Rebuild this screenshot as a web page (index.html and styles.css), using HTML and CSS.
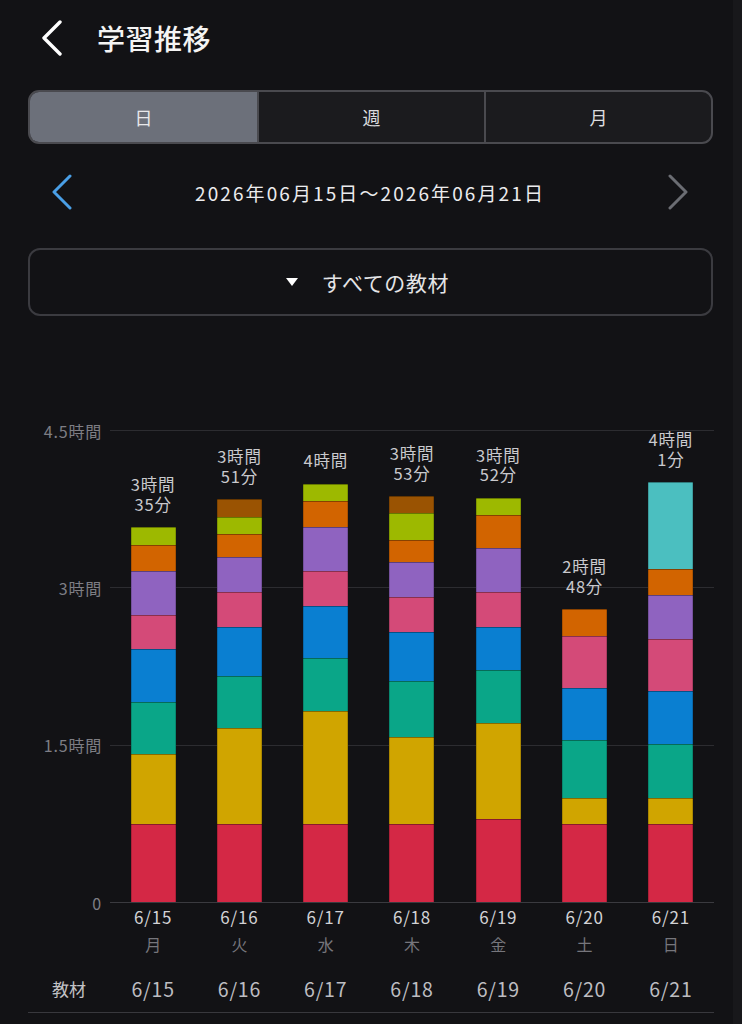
FILE: index.html
```html
<!DOCTYPE html>
<html lang="ja">
<head>
<meta charset="utf-8">
<title>学習推移</title>
<link rel="stylesheet" href="styles.css">
</head>
<body>
<div class="app">
  <header class="header">
    <svg class="back" width="24" height="36" viewBox="0 0 24 36"><path d="M20 2 L4 18 L20 34" fill="none" stroke="#ffffff" stroke-width="3.4" stroke-linecap="round" stroke-linejoin="round"/></svg>
    <h1 class="title">学習推移</h1>
  </header>

  <div class="tabs">
    <div class="tab active">日</div>
    <div class="tab">週</div>
    <div class="tab">月</div>
  </div>

  <div class="datenav">
    <svg class="chev" width="22" height="36" viewBox="0 0 22 36"><path d="M19 2 L3 18 L19 34" fill="none" stroke="#4a9fe6" stroke-width="3" stroke-linecap="round" stroke-linejoin="round"/></svg>
    <div class="range">2026年06月15日～2026年06月21日</div>
    <svg class="chev" width="22" height="36" viewBox="0 0 22 36"><path d="M3 2 L19 18 L3 34" fill="none" stroke="#6b6d73" stroke-width="3" stroke-linecap="round" stroke-linejoin="round"/></svg>
  </div>

  <div class="select">
    <span class="tri"></span>
    <span class="select-text">すべての教材</span>
  </div>

  <div class="chart">
    <div class="grid-layer">
      <div class="gl"><span class="yl">4.5時間</span><span class="line"></span></div>
      <div class="gl"><span class="yl">3時間</span><span class="line"></span></div>
      <div class="gl"><span class="yl">1.5時間</span><span class="line"></span></div>
      <div class="gl"><span class="yl">0</span><span class="line base"></span></div>
    </div>
    <div class="bars-layer">
      <div class="col">
        <div class="val"><span class="vl">3時間</span><span class="vl">35分</span></div>
        <div class="bar">
          <div class="seg lime" style="height:17.44px"></div>
          <div class="seg orange" style="height:26.17px"></div>
          <div class="seg purple" style="height:43.61px"></div>
          <div class="seg pink" style="height:34.89px"></div>
          <div class="seg blue" style="height:52.33px"></div>
          <div class="seg teal" style="height:52.33px"></div>
          <div class="seg yellow" style="height:69.78px"></div>
          <div class="seg red" style="height:78.5px"></div>
        </div>
      </div>
      <div class="col">
        <div class="val"><span class="vl">3時間</span><span class="vl">51分</span></div>
        <div class="bar">
          <div class="seg brown" style="height:17.44px"></div>
          <div class="seg lime" style="height:17.44px"></div>
          <div class="seg orange" style="height:22.68px"></div>
          <div class="seg purple" style="height:34.89px"></div>
          <div class="seg pink" style="height:34.89px"></div>
          <div class="seg blue" style="height:48.84px"></div>
          <div class="seg teal" style="height:52.33px"></div>
          <div class="seg yellow" style="height:95.94px"></div>
          <div class="seg red" style="height:78.5px"></div>
        </div>
      </div>
      <div class="col">
        <div class="val"><span class="vl">4時間</span></div>
        <div class="bar">
          <div class="seg lime" style="height:17.44px"></div>
          <div class="seg orange" style="height:26.17px"></div>
          <div class="seg purple" style="height:43.61px"></div>
          <div class="seg pink" style="height:34.89px"></div>
          <div class="seg blue" style="height:52.33px"></div>
          <div class="seg teal" style="height:52.33px"></div>
          <div class="seg yellow" style="height:113.39px"></div>
          <div class="seg red" style="height:78.5px"></div>
        </div>
      </div>
      <div class="col">
        <div class="val"><span class="vl">3時間</span><span class="vl">53分</span></div>
        <div class="bar">
          <div class="seg brown" style="height:17.44px"></div>
          <div class="seg lime" style="height:26.17px"></div>
          <div class="seg orange" style="height:22.68px"></div>
          <div class="seg purple" style="height:34.89px"></div>
          <div class="seg pink" style="height:34.89px"></div>
          <div class="seg blue" style="height:48.84px"></div>
          <div class="seg teal" style="height:55.82px"></div>
          <div class="seg yellow" style="height:87.22px"></div>
          <div class="seg red" style="height:78.5px"></div>
        </div>
      </div>
      <div class="col">
        <div class="val"><span class="vl">3時間</span><span class="vl">52分</span></div>
        <div class="bar">
          <div class="seg lime" style="height:17.44px"></div>
          <div class="seg orange" style="height:33.14px"></div>
          <div class="seg purple" style="height:43.61px"></div>
          <div class="seg pink" style="height:34.89px"></div>
          <div class="seg blue" style="height:43.61px"></div>
          <div class="seg teal" style="height:52.33px"></div>
          <div class="seg yellow" style="height:95.94px"></div>
          <div class="seg red" style="height:83.73px"></div>
        </div>
      </div>
      <div class="col">
        <div class="val"><span class="vl">2時間</span><span class="vl">48分</span></div>
        <div class="bar">
          <div class="seg orange" style="height:26.17px"></div>
          <div class="seg pink" style="height:52.33px"></div>
          <div class="seg blue" style="height:52.33px"></div>
          <div class="seg teal" style="height:57.57px"></div>
          <div class="seg yellow" style="height:26.17px"></div>
          <div class="seg red" style="height:78.5px"></div>
        </div>
      </div>
      <div class="col">
        <div class="val"><span class="vl">4時間</span><span class="vl">1分</span></div>
        <div class="bar">
          <div class="seg cyan" style="height:87.22px"></div>
          <div class="seg orange" style="height:26.17px"></div>
          <div class="seg purple" style="height:43.61px"></div>
          <div class="seg pink" style="height:52.33px"></div>
          <div class="seg blue" style="height:52.33px"></div>
          <div class="seg teal" style="height:54.08px"></div>
          <div class="seg yellow" style="height:26.17px"></div>
          <div class="seg red" style="height:78.5px"></div>
        </div>
      </div>
    </div>
  </div>

  <div class="xlabels">
    <div class="xl"><span class="xd">6/15</span><span class="xw">月</span></div>
    <div class="xl"><span class="xd">6/16</span><span class="xw">火</span></div>
    <div class="xl"><span class="xd">6/17</span><span class="xw">水</span></div>
    <div class="xl"><span class="xd">6/18</span><span class="xw">木</span></div>
    <div class="xl"><span class="xd">6/19</span><span class="xw">金</span></div>
    <div class="xl"><span class="xd">6/20</span><span class="xw">土</span></div>
    <div class="xl"><span class="xd">6/21</span><span class="xw">日</span></div>
  </div>

  <div class="table-row">
    <div class="th">教材</div>
    <div class="td">6/15</div>
    <div class="td">6/16</div>
    <div class="td">6/17</div>
    <div class="td">6/18</div>
    <div class="td">6/19</div>
    <div class="td">6/20</div>
    <div class="td">6/21</div>
  </div>
</div>
</body>
</html>
```

FILE: styles.css
```css
* { box-sizing: border-box; }

html, body {
  margin: 0;
  padding: 0;
}

body {
  width: 742px;
  height: 1024px;
  overflow: hidden;
  background: linear-gradient(to right, #121215 733px, #18181b 733px);
  color: #e6e6e8;
  font-family: "Noto Sans CJK JP", "Noto Sans", sans-serif;
}

.app {
  display: flex;
  flex-direction: column;
}

/* header */
.header {
  height: 78px;
  display: flex;
  align-items: center;
  padding-left: 40px;
}

.back {
  display: block;
  margin-top: -2px;
}

.title {
  margin: -3px 0 0 33px;
  font-size: 28px;
  font-weight: 500;
  letter-spacing: 0.5px;
  color: #f4f4f4;
  line-height: 1;
}

/* segmented tabs */
.tabs {
  margin: 12px 29px 0 28px;
  height: 54px;
  display: grid;
  grid-template-columns: 1fr 1fr 1fr;
  border: 2px solid #4a4a4f;
  border-radius: 11px;
  overflow: hidden;
  background: #1b1b1e;
}

.tab {
  display: flex;
  align-items: center;
  justify-content: center;
  font-size: 18px;
  color: #dcdcde;
}

.tab + .tab {
  border-left: 2px solid #4a4a4f;
}

.tab.active {
  background: #6c707a;
  color: #e8e8ea;
}

/* date navigation */
.datenav {
  margin-top: 13px;
  height: 70px;
  display: flex;
  align-items: center;
  justify-content: space-between;
  padding: 0 53px 0 51px;
}

.chev { display: block; }

.range {
  font-size: 19px;
  letter-spacing: 2.1px;
  color: #ececee;
}

/* dropdown */
.select {
  margin: 21px 29px 0 28px;
  height: 68px;
  border: 2px solid #3b3b40;
  border-radius: 12px;
  display: flex;
  align-items: center;
  justify-content: center;
  gap: 24px;
  padding-right: 6px;
}

.tri {
  width: 0;
  height: 0;
  border-left: 6.5px solid transparent;
  border-right: 6.5px solid transparent;
  border-top: 8px solid #ffffff;
}

.select-text {
  font-size: 21px;
  letter-spacing: 0.6px;
  color: #e4e4e6;
}

/* chart */
.chart {
  margin: 114px 28px 0 0;
  height: 472px;
  display: grid;
}

.grid-layer,
.bars-layer {
  grid-area: 1 / 1;
}

.grid-layer {
  display: flex;
  flex-direction: column;
  justify-content: space-between;
}

.gl {
  height: 1px;
  display: flex;
  align-items: center;
  gap: 8px;
}

.yl {
  width: 102px;
  flex: none;
  text-align: right;
  font-size: 16px;
  letter-spacing: 0.8px;
  color: #7e7e84;
  line-height: 20px;
}

.line {
  flex: 1;
  height: 1px;
  background: #2c2c30;
}

.line.base {
  background: #3a3a3f;
}

.bars-layer {
  padding: 0 0 1px 110px;
  display: grid;
  grid-template-columns: repeat(7, 1fr);
  align-items: end;
}

.col {
  display: flex;
  flex-direction: column;
  align-items: center;
  justify-content: flex-end;
}

.val {
  display: flex;
  flex-direction: column;
  align-items: center;
  margin-bottom: 13px;
}

.vl {
  display: block;
  height: 19.5px;
  font-size: 16.5px;
  line-height: 19.5px;
  letter-spacing: 0.8px;
  color: #c9c9cd;
  white-space: nowrap;
}

.bar {
  width: 45px;
  display: flex;
  flex-direction: column;
}

.seg {
  flex: none;
  box-shadow: inset 0 1px 0 rgba(0,0,0,0.35), inset 1px 0 0 rgba(0,0,0,0.18), inset -1px 0 0 rgba(0,0,0,0.18);
}

.red    { background: #d42845; }
.yellow { background: #d0a500; }
.teal   { background: #0aa688; }
.blue   { background: #0a7fd1; }
.pink   { background: #d44a78; }
.purple { background: #8f63c0; }
.orange { background: #d26400; }
.lime   { background: #9db900; }
.brown  { background: #9a5302; }
.cyan   { background: #4bbfc0; }

/* x labels */
.xlabels {
  margin: 4px 28px 0 110px;
  display: grid;
  grid-template-columns: repeat(7, 1fr);
}

.xl {
  display: flex;
  flex-direction: column;
  align-items: center;
}

.xd {
  font-size: 17px;
  line-height: 22px;
  letter-spacing: 0.8px;
  color: #d2d2d5;
}

.xw {
  margin-top: 5px;
  font-size: 16px;
  line-height: 22px;
  color: #76767c;
}

/* table header row */
.table-row {
  margin: 10px 28px 0 28px;
  height: 48px;
  display: grid;
  grid-template-columns: 82px repeat(7, 1fr);
  align-items: center;
  border-bottom: 1px solid #38383d;
}

.th {
  text-align: center;
  font-size: 17px;
  color: #c2c2c6;
}

.td {
  text-align: center;
  font-size: 19.5px;
  letter-spacing: 0.8px;
  color: #bdbdc1;
}
```
